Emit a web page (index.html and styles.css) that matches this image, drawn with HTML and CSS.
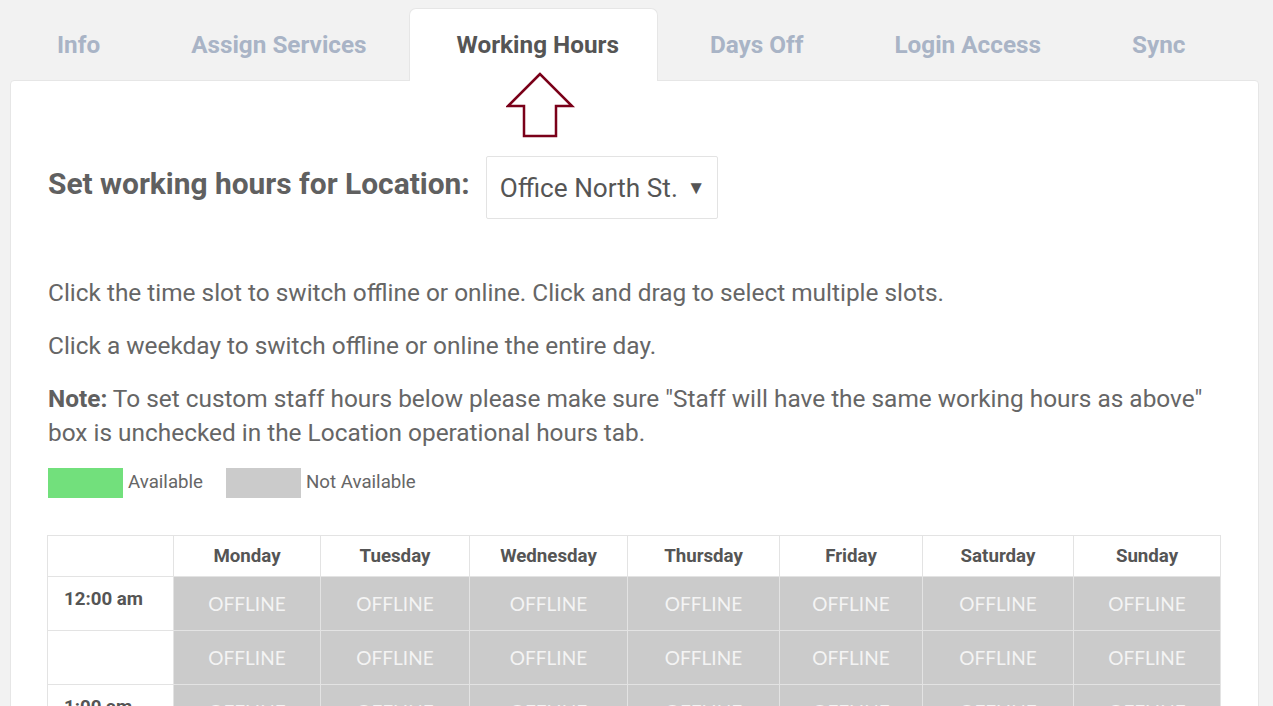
FILE: index.html
```html
<!DOCTYPE html>
<html lang="en">
<head>
    <meta charset="UTF-8">
    <meta name="viewport" content="width=device-width, initial-scale=1.0">
    <title>Staff - Working Hours</title>
    <link rel="stylesheet" href="styles.css">
</head>
<body>
    <div class="page">
        <ul class="tabs">
            <li class="tab">Info</li>
            <li class="tab">Assign Services</li>
            <li class="tab active">Working Hours</li>
            <li class="tab">Days Off</li>
            <li class="tab">Login Access</li>
            <li class="tab">Sync</li>
        </ul>

        <svg class="pointer" width="70" height="70" viewBox="0 0 70 70">
            <polygon points="34,2 2,34 18,34 18,64 50,64 50,34 66,34" fill="none" stroke="#7a0019" stroke-width="2.5" stroke-linejoin="miter"/>
        </svg>

        <div class="card">
            <div class="location-row">
                <h2>Set working hours for Location:</h2>
                <div class="location-select">
                    <span>Office North St.</span>
                    <span class="caret">&#9660;</span>
                </div>
            </div>

            <p>Click the time slot to switch offline or online. Click and drag to select multiple slots.</p>
            <p>Click a weekday to switch offline or online the entire day.</p>
            <p><b>Note:</b> To set custom staff hours below please make sure "Staff will have the same working hours as above" box is unchecked in the Location operational hours tab.</p>

            <div class="legend">
                <span class="swatch green"></span><span class="legend-label">Available</span>
                <span class="swatch grey"></span><span class="legend-label">Not Available</span>
            </div>

            <table class="hours">
                <thead>
                    <tr>
                        <th></th>
                        <th>Monday</th>
                        <th>Tuesday</th>
                        <th>Wednesday</th>
                        <th>Thursday</th>
                        <th>Friday</th>
                        <th>Saturday</th>
                        <th>Sunday</th>
                    </tr>
                </thead>
                <tbody id="slots"></tbody>
            </table>
        </div>
    </div>

    <script>
        let slots = document.getElementById('slots');
        let hours = ['12:00 am', '1:00 am', '2:00 am', '3:00 am'];

        hours.forEach(function (hour) {
            for (let half = 0; half < 2; half++) {
                let row = document.createElement('tr');
                let label = document.createElement('td');
                label.className = 'time';
                label.textContent = half === 0 ? hour : '';
                row.appendChild(label);
                for (let d = 0; d < 7; d++) {
                    let cell = document.createElement('td');
                    cell.className = 'slot';
                    cell.textContent = 'OFFLINE';
                    row.appendChild(cell);
                }
                slots.appendChild(row);
            }
        });
    </script>
</body>
</html>
```

FILE: styles.css
```css
body {
    margin: 0;
    background: #f2f2f2;
    font-family: Roboto, 'Liberation Sans', sans-serif;
    color: #666;
    overflow: hidden;
}
.page {
    position: relative;
    padding: 8px 14px 0 10px;
}
.tabs {
    display: flex;
    gap: 5px;
    list-style: none;
    margin: 0 0 -1px 0;
    padding: 0 0 0 4px;
    position: relative;
    z-index: 1;
}
.tab {
    height: 71px;
    line-height: 72px;
    padding: 0 42px;
    font-size: 24.3px;
    font-weight: bold;
    color: #a9b4c6;
    border: 1px solid transparent;
    border-bottom: none;
    border-radius: 7px 7px 0 0;
}
.tab.active {
    background: #fff;
    color: #555;
    border-color: #e6e6e6;
    height: 72px;
    margin: 0 4px 0 -6px;
    padding: 0 38px 0 47px;
}
.pointer {
    position: absolute;
    left: 506px;
    top: 72px;
    z-index: 2;
}
.card {
    background: #fff;
    border: 1px solid #e6e6e6;
    border-radius: 4px;
    padding: 75px 37px 80px 37px;
}
.location-row {
    display: flex;
    align-items: flex-start;
    gap: 16px;
    margin-bottom: 57px;
}
.location-row h2 {
    margin: 11px 0 0 0;
    font-size: 29.9px;
    line-height: 34px;
    color: #606060;
}
.location-select {
    display: flex;
    align-items: center;
    height: 61px;
    padding: 0 11px 0 13px;
    border: 1px solid #e3e3e3;
    border-radius: 2px;
    font-size: 26.2px;
    color: #555;
}
.caret {
    font-size: 19px;
    margin-left: 9px;
    color: #555;
}
.card p {
    margin: 0 0 19px 0;
    font-size: 24.4px;
    line-height: 34px;
    color: #666;
}
.card p b {
    color: #606060;
}
.legend {
    display: flex;
    align-items: center;
    margin: -1px 0 37px 0;
}
.swatch {
    width: 75px;
    height: 30px;
}
.swatch.green {
    background: #72e07c;
}
.swatch.grey {
    background: #cbcbcb;
}
.legend-label {
    font-size: 18.7px;
    margin: -3px 23px 0 5px;
    color: #666;
}
.hours {
    width: calc(100% + 1px);
    margin-left: -1px;
    border-collapse: collapse;
}
.hours th,
.hours td {
    border: 1px solid #e3e3e3;
    padding: 0;
}
.hours th {
    height: 40px;
    font-size: 18.7px;
    font-weight: bold;
    color: #555;
}
.hours th:nth-child(1) { width: 125px; }
.hours th:nth-child(2) { width: 146px; }
.hours th:nth-child(3) { width: 148px; }
.hours th:nth-child(4) { width: 157px; }
.hours th:nth-child(5) { width: 151px; }
.hours th:nth-child(6) { width: 142px; }
.hours th:nth-child(7) { width: 150px; }
.hours td {
    height: 53px;
}
.hours .time {
    vertical-align: top;
    height: 41px;
    padding: 11px 0 0 16px;
    font-size: 18.7px;
    font-weight: bold;
    color: #555;
}
.hours .slot {
    background: #cbcbcb;
    color: #f4f4f4;
    text-align: center;
    font-family: Lato, 'Open Sans', sans-serif;
    font-size: 19px;
}
```
